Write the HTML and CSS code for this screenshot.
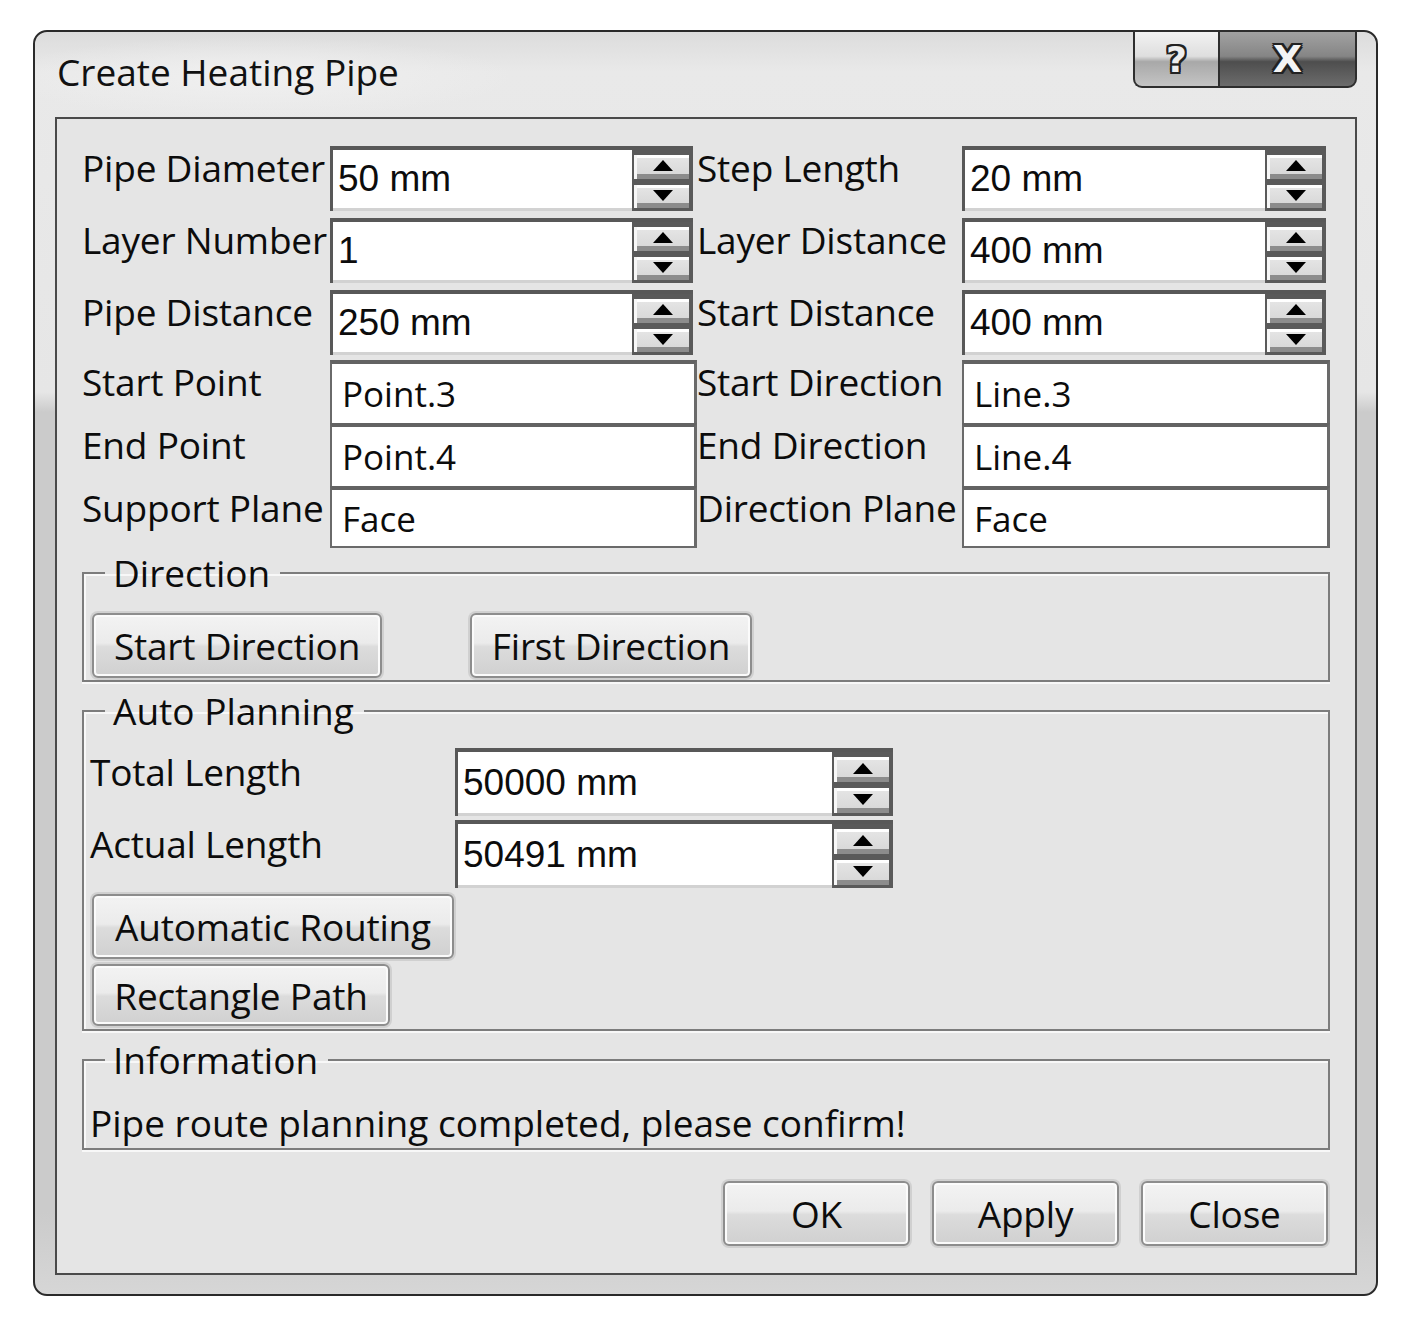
FILE: index.html
```html
<!DOCTYPE html>
<html>
<head>
<meta charset="utf-8">
<title>Create Heating Pipe</title>
<link rel="stylesheet" href="styles.css">
</head>
<body>
<div class="window">
  <div class="titlebar">
    <div class="title">Create Heating Pipe</div>
    <div class="caption">
      <div class="cap-btn help"><span>?</span></div>
      <div class="cap-btn close"><span>X</span></div>
    </div>
  </div>
  <div class="client">
    <div class="fields">
      <div class="lbl">Pipe Diameter</div>
      <div class="spin"><div class="val">50 mm</div><div class="arrows"><div class="ab"><i class="up"></i></div><div class="ab"><i class="down"></i></div></div></div>
      <div class="lbl">Step Length</div>
      <div class="spin"><div class="val">20 mm</div><div class="arrows"><div class="ab"><i class="up"></i></div><div class="ab"><i class="down"></i></div></div></div>

      <div class="lbl">Layer Number</div>
      <div class="spin"><div class="val">1</div><div class="arrows"><div class="ab"><i class="up"></i></div><div class="ab"><i class="down"></i></div></div></div>
      <div class="lbl">Layer Distance</div>
      <div class="spin"><div class="val">400 mm</div><div class="arrows"><div class="ab"><i class="up"></i></div><div class="ab"><i class="down"></i></div></div></div>

      <div class="lbl">Pipe Distance</div>
      <div class="spin"><div class="val">250 mm</div><div class="arrows"><div class="ab"><i class="up"></i></div><div class="ab"><i class="down"></i></div></div></div>
      <div class="lbl">Start Distance</div>
      <div class="spin"><div class="val">400 mm</div><div class="arrows"><div class="ab"><i class="up"></i></div><div class="ab"><i class="down"></i></div></div></div>

      <div class="lbl">Start Point</div>
      <div class="edit">Point.3</div>
      <div class="lbl">Start Direction</div>
      <div class="edit">Line.3</div>

      <div class="lbl">End Point</div>
      <div class="edit">Point.4</div>
      <div class="lbl">End Direction</div>
      <div class="edit">Line.4</div>

      <div class="lbl">Support Plane</div>
      <div class="edit last">Face</div>
      <div class="lbl">Direction Plane</div>
      <div class="edit last">Face</div>
    </div>

    <fieldset class="group direction">
      <legend>Direction</legend>
      <div class="dir-buttons">
        <div class="btn btn-start">Start Direction</div>
        <div class="btn btn-first">First Direction</div>
      </div>
    </fieldset>

    <fieldset class="group auto">
      <legend>Auto Planning</legend>
      <div class="auto-grid">
        <div class="lbl">Total Length</div>
        <div class="spin"><div class="val">50000 mm</div><div class="arrows"><div class="ab"><i class="up"></i></div><div class="ab"><i class="down"></i></div></div></div>
        <div class="lbl">Actual Length</div>
        <div class="spin"><div class="val">50491 mm</div><div class="arrows"><div class="ab"><i class="up"></i></div><div class="ab"><i class="down"></i></div></div></div>
      </div>
      <div class="btn btn-auto">Automatic Routing</div>
      <div class="btn btn-rect">Rectangle Path</div>
    </fieldset>

    <fieldset class="group info">
      <legend>Information</legend>
      <div class="info-text">Pipe route planning completed, please confirm!</div>
    </fieldset>

    <div class="footer">
      <div class="btn btn-foot">OK</div>
      <div class="btn btn-foot">Apply</div>
      <div class="btn btn-foot">Close</div>
    </div>
  </div>
</div>
</body>
</html>
```

FILE: styles.css
```css
html, body {
  margin: 0;
  padding: 0;
  background: #ffffff;
}

body {
  font-family: "Open Sans", "Noto Sans", sans-serif;
  color: #0c0c0c;
}

.window {
  box-sizing: border-box;
  margin: 30px 0 0 33px;
  width: 1345px;
  height: 1266px;
  border: 2px solid #2a2a2a;
  border-radius: 14px;
  background:
    linear-gradient(180deg, #dcdcdc 0px, #e9e9e9 40px, #e6e6e6 360px, #cbcbcb 380px, #cbcbcb 1180px, #d6d6d6 100%);
  display: flex;
  flex-direction: column;
}

.titlebar {
  height: 85px;
  display: flex;
  align-items: center;
  background: radial-gradient(ellipse 260px 40px at 220px 45px, #f0f0f0 0%, rgba(240,240,240,0) 100%);
  border-radius: 12px 12px 0 0;
}

.title {
  flex: 1;
  padding-left: 22px;
  margin-top: -6px;
  font-size: 37px;
  color: #111;
}

.caption {
  align-self: flex-start;
  margin-top: -2px;
  margin-right: 19px;
  display: flex;
}

.cap-btn {
  box-sizing: border-box;
  height: 58px;
  border: 2px solid #2e2e2e;
  display: flex;
  align-items: center;
  justify-content: center;
  font-family: "DejaVu Sans", sans-serif;
  font-weight: bold;
  color: #f4f4f4;
  text-shadow:
    2px 0 0 #222, -2px 0 0 #222, 0 2px 0 #222, 0 -2px 0 #222,
    2px 2px 0 #222, -2px -2px 0 #222, 2px -2px 0 #222, -2px 2px 0 #222;
}

.cap-btn.help {
  width: 85px;
  border-right: none;
  border-radius: 0 0 0 9px;
  background: linear-gradient(180deg, #f2f2f2 0%, #dedede 45%, #a8a8a8 55%, #c4c4c4 100%);
  font-size: 36px;
  color: #eeeeee;
}

.cap-btn.close {
  width: 139px;
  border-radius: 0 0 9px 0;
  background: linear-gradient(180deg, #a2a2a2 0%, #858585 45%, #4e4e4e 55%, #6c6c6c 100%);
  font-size: 38px;
}

.client {
  box-sizing: border-box;
  flex: 1;
  margin: 0 19px 19px 20px;
  border: 2px solid #4a4a4a;
  background: #e5e5e5;
  padding: 27px 25px 26px 25px;
  display: flex;
  flex-direction: column;
}

/* top form grid */
.fields {
  display: grid;
  grid-template-columns: 248px 367px 265px 368px;
  grid-template-rows: 72px 72px 70px 63px 63px 61px;
}

.lbl {
  font-size: 37px;
  line-height: 48px;
  white-space: nowrap;
  color: #0c0c0c;
  align-self: start;
  margin-top: -2px;
  letter-spacing: -0.2px;
}

.spin {
  box-sizing: border-box;
  width: calc(100% - 4px);
  height: 65px;
  display: flex;
  border-top: 4px solid #585858;
  border-left: 3px solid #585858;
  align-self: start;
}

.spin .val {
  flex: 1;
  background: #ffffff;
  border-bottom: 3px solid #d2d2d2;
  font-family: "Liberation Sans", Arial, sans-serif;
  font-size: 37px;
  padding-left: 5px;
  display: flex;
  align-items: center;
  color: #0c0c0c;
}

.spin .arrows {
  box-sizing: border-box;
  width: 61px;
  background: #5a5a5a;
  padding: 5px 4px 3px 2px;
  display: flex;
  flex-direction: column;
  gap: 6px;
}

.spin .ab {
  flex: 1;
  display: flex;
  align-items: center;
  justify-content: center;
  background: linear-gradient(180deg, #ffffff 0, #ffffff 3px, #e4e4e4 3px, #d9d9d9 calc(100% - 5px), #8c8c8c calc(100% - 5px));
  border-left: 3px solid #f7f7f7;
}

.spin .up {
  width: 0;
  height: 0;
  border-left: 10px solid transparent;
  border-right: 10px solid transparent;
  border-bottom: 11px solid #000;
  margin-top: -2px;
}

.spin .down {
  width: 0;
  height: 0;
  border-left: 10px solid transparent;
  border-right: 10px solid transparent;
  border-top: 11px solid #000;
  margin-top: -2px;
}

.edit {
  box-sizing: border-box;
  height: 63px;
  background: #ffffff;
  border-top: 4px solid #636363;
  border-left: 2px solid #6a6a6a;
  border-right: 3px solid #6a6a6a;
  font-size: 35px;
  padding-left: 10px;
  display: flex;
  align-items: center;
  color: #0c0c0c;
}

.edit.last {
  height: 62px;
  border-bottom: 2px solid #6a6a6a;
}

/* group boxes */
.group {
  margin: 6px 0 0 0;
  padding: 20px 6px 2px 4px;
  border: 2px solid #7c7c7c;
  box-shadow: inset 2px 2px 0 #f8f8f8, 0 2px 0 #f8f8f8;
  min-width: 0;
}

.group legend {
  font-size: 37px;
  line-height: 40px;
  padding: 0 10px 0 8px;
  margin-left: 17px;
  color: #0c0c0c;
}

.direction {
  margin-top: 6px;
  padding-top: 20px;
  padding-bottom: 2px;
}

.dir-buttons {
  display: flex;
  gap: 88px;
  padding-left: 4px;
}

.btn {
  box-sizing: border-box;
  height: 65px;
  border: 2px solid #8d8d8d;
  border-radius: 6px;
  box-shadow: inset 0 0 0 2px #fbfbfb, 0 0 0 2px #d0d0d0;
  background: linear-gradient(180deg, #f3f3f3 0%, #ebebeb 46%, #dcdcdc 52%, #d0d0d0 100%);
  font-size: 37px;
  display: flex;
  align-items: center;
  justify-content: center;
  color: #0c0c0c;
  white-space: nowrap;
  letter-spacing: -0.2px;
}

.btn-start { width: 290px; }
.btn-first { width: 282px; }

.auto {
  margin-top: 9px;
  padding: 17px 6px 3px 4px;
}

.auto-grid {
  display: grid;
  grid-template-columns: 367px 438px;
  grid-template-rows: 72px 68px;
}

.auto-grid .lbl {
  padding-left: 2px;
  margin-top: 0;
}

.auto-grid .spin {
  width: 100%;
  height: 68px;
}

.btn-auto {
  width: 362px;
  margin: 6px 0 0 4px;
}

.btn-rect {
  width: 298px;
  height: 62px;
  margin: 5px 0 0 4px;
}

.info {
  margin-top: 9px;
  padding: 21px 6px 3px 4px;
}

.info-text {
  font-size: 37px;
  line-height: 44px;
  padding-left: 2px;
  white-space: nowrap;
  color: #0c0c0c;
}

.footer {
  margin-top: 31px;
  display: flex;
  justify-content: flex-end;
  gap: 22px;
  padding-right: 2px;
}

.btn-foot {
  width: 187px;
}
```
